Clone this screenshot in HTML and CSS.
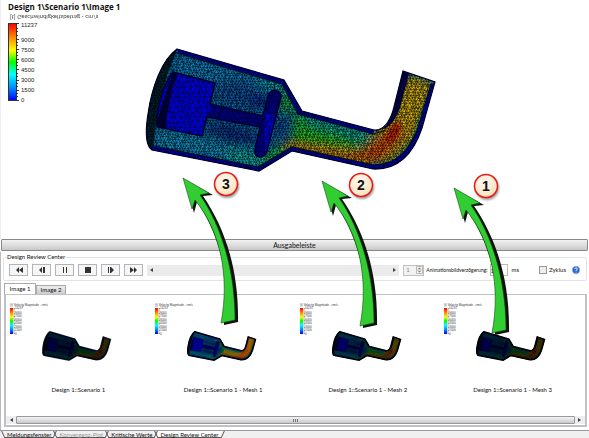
FILE: index.html
```
<!DOCTYPE html>
<html lang="de">
<head>
<meta charset="utf-8">
<title>Design Review Center</title>
<link rel="stylesheet" href="styles.css">
</head>
<body>
<svg class="defs" aria-hidden="true">
  <defs>
    <linearGradient id="ramp" x1="0" y1="0" x2="0" y2="1">
      <stop offset="0" stop-color="#f00"/><stop offset=".16" stop-color="#ff7a00"/><stop offset=".35" stop-color="#ff0"/>
      <stop offset=".5" stop-color="#0f0"/><stop offset=".66" stop-color="#0ff"/><stop offset=".85" stop-color="#0080ff"/><stop offset="1" stop-color="#00f"/>
    </linearGradient>
    <radialGradient id="badge" cx=".4" cy=".35" r=".7">
      <stop offset="0" stop-color="#fffaf2"/><stop offset="1" stop-color="#fbe0b8"/>
    </radialGradient>
    <filter id="soft" x="-50%" y="-50%" width="200%" height="200%"><feGaussianBlur stdDeviation="5"/></filter>
    <filter id="shade" x="-30%" y="-30%" width="160%" height="160%"><feGaussianBlur stdDeviation="1"/></filter>
    <path id="shell" d="M177 49L284 80L302 111L374 130C384 131 391 120 394 107L403 71L435 82L422 128C413 155 397 170 373 169L292 151L259 171L152 150C146 146 145 133 148 114C152 86 162 60 177 49Z"/>
    <path id="core" d="M173 72L215 83L210 104L263 116L268 96C270 87 282 90 281 97L267 151C264 160 253 158 255 150L260 127L207 117L202 136L157 127C156 108 163 85 173 72Z"/>
    <clipPath id="shellClip"><use href="#shell"/></clipPath>
    <clipPath id="coreClip"><use href="#core"/></clipPath>
    <g id="model">
      <g clip-path="url(#shellClip)">
        <rect x="140" y="40" width="300" height="140" fill="#0878b8"/>
        <g filter="url(#soft)">
          <path d="M180 55L275 82L270 98L175 72Z" fill="#0894dc"/>
          <path d="M158 128L250 147L256 168L152 147Z" fill="#08a0d8"/>
          <ellipse cx="238" cy="94" rx="24" ry="14" fill="#0860b8" transform="rotate(14 238 94)"/>
          <ellipse cx="260" cy="100" rx="9" ry="7" fill="#0818a0"/>
          <ellipse cx="232" cy="135" rx="26" ry="9" fill="#0838a0" transform="rotate(14 232 135)"/>
          <path d="M255 76L284 84L288 94L270 88Z" fill="#08c0a8"/>
          <path d="M282 90L294 104L288 114L280 110Z" fill="#20d030"/>
          <ellipse cx="283" cy="126" rx="6" ry="11" fill="#0848b0"/>
          <path d="M225 148L268 154L258 170L230 164Z" fill="#08c8c0"/>
          <path d="M262 158L292 140L302 150L266 168Z" fill="#20d840"/>
          <path d="M296 110L378 130L372 170L290 150Z" fill="#20d828"/>
          <path d="M302 112L372 130L366 142L305 124Z" fill="#08b8b0"/>
          <path d="M284 142L350 150L372 150L376 166L288 154Z" fill="#f88808"/>
          <path d="M374 132L392 114L404 74L434 82L418 136L390 164L365 160Z" fill="#e8c008"/>
          <path d="M346 160L388 132L396 116L404 136L380 160Z" fill="#f05008"/>
          <path d="M342 134L374 134L362 146Z" fill="#08b8a0"/>
        </g>
        <ellipse cx="393" cy="133" rx="5" ry="11" fill="#f02000" filter="url(#shade)" opacity=".8" transform="rotate(35 393 133)"/>
        <path d="M177 51Q157 92 153 150L140 150V60Z" fill="#022838"/>
        <path d="M374 168C398 170 411 154 419 128L424 110" fill="none" stroke="#10b860" stroke-width="6" opacity=".7" filter="url(#shade)"/>
        <path d="M178 50L284 81L301 112L374 131" fill="none" stroke="#0000e0" stroke-width="6"/>
        <path d="M434 84L421 128C412 154 396 168 373 168L292 150L259 170L152 149" fill="none" stroke="#0000e0" stroke-width="6"/>
        <path d="M402 70L409 74L400 108Q395 122 386 128L374 131C386 131 391 120 394 107Z" fill="#000070"/>
        <path class="mesh-fine" fill="none" stroke="#000" stroke-width=".65" opacity=".85"/>
      </g>
      <g clip-path="url(#coreClip)">
        <use href="#core" fill="#0000d4"/>
        <path d="M173 72L178 73Q167 99 166 130L155 127Z" fill="#00003c"/>
        <path d="M215 103L285 118L285 88L265 88V162L250 158L258 127L205 118Z" fill="#000060" opacity=".7"/>
        <path class="mesh-coarse" fill="none" stroke="#000" stroke-width=".6" opacity=".8"/>
      </g>
      <use href="#core" fill="none" stroke="#00002c" stroke-width="1.5"/>
      <path d="M177 53L282 84L298 114L373 134L386 130M431 84L418 128C409 151 396 165 373 165L292 147L258 167L154 146" fill="none" stroke="#001018" stroke-width="1.2"/>
      <use href="#shell" fill="none" stroke="#000028" stroke-width="1.2"/>
    </g>
    <g id="scale">
      <rect x="0" y="2" width="3" height="26" fill="url(#ramp)"/>
      <path d="M4 2V28M4 2.5H5M4 7.5H5M4 10.5H5M4 14.5H5M4 17.5H5M4 21.5H5M4 24.5H5M4 27.5H5" stroke="#777" stroke-width=".6"/>
      <g class="scale-text">
        <text x="0" y="0">(t) Velocity Magnitude - cm/s</text>
        <text x="5" y="3">11237</text><text x="5" y="8">9000</text><text x="5" y="11">7500</text><text x="5" y="15">6000</text>
        <text x="5" y="18">4500</text><text x="5" y="22">3000</text><text x="5" y="25">1500</text><text x="5" y="29">0</text>
      </g>
    </g>
    <g id="arrow">
      <path d="M185 180L213 195L203 196C225 228 239 270 238 322L224 325L224 320C232 270 214 226 197 202L194 213Z" fill="#111"/>
      <path d="M183 178L209 193L200 195C221 225 235 270 235 320L221 323C230 275 220 231 195 200L192 209Z" fill="#32cd32" stroke="#164a16" stroke-width=".6"/>
    </g>
  </defs>
</svg>

<main class="app">
  <section class="viewer">
    <header class="caption">
      <h1>Design 1\Scenario 1\Image 1</h1>
      <p class="flipped">[t] Geschwindigkeitsbetrag - cm/s</p>
    </header>
    <div class="stage">
      <div class="legend">
        <svg class="ramp" viewBox="0 0 11 78" aria-hidden="true">
          <rect x=".5" y=".5" width="8" height="77" fill="url(#ramp)" stroke="#333"/>
          <path d="M9 .5H11M9 16.5H11M9 26.5H11M9 36.5H11M9 46.5H11M9 57.5H11M9 67.5H11M9 77.5H11M9 5.5H10M9 8.5H10M9 12.5H10M9 19.5H10M9 22.5H10M9 29.5H10M9 32.5H10M9 39.5H10M9 42.5H10M9 50.5H10M9 53.5H10M9 60.5H10M9 63.5H10M9 70.5H10M9 73.5H10" stroke="#333"/>
        </svg>
        <ol class="ticks"><li class="max">11237</li><li>9000</li><li>7500</li><li>6000</li><li>4500</li><li>3000</li><li>1500</li><li>0</li></ol>
      </div>
      <svg class="model" viewBox="140 40 300 140" role="img" aria-label="Mesh"><use href="#model"/></svg>
    </div>
  </section>

  <h2 class="bar">Ausgabeleiste</h2>

  <section class="dock">
    <fieldset class="player">
      <legend>Design Review Center</legend>
      <div class="controls">
        <button aria-label="Zurück"><svg viewBox="0 0 8 6"><path d="M4 0V6L1 3ZM8 0V6L4 3Z"/></svg></button>
        <button aria-label="Schritt zurück"><svg viewBox="0 0 8 6"><path d="M4 0V6L1 3ZM5 0H7V6H5Z"/></svg></button>
        <button aria-label="Pause"><svg viewBox="0 0 8 6"><path d="M2 0H3V6H2ZM5 0H6V6H5Z"/></svg></button>
        <button aria-label="Stopp"><svg viewBox="0 0 8 6"><path d="M1 0H7V6H1Z"/></svg></button>
        <button aria-label="Schritt vor"><svg viewBox="0 0 8 6"><path d="M1 0H2V6H1ZM3 0L4 0V6H3ZM4 0L7 3L4 6Z"/></svg></button>
        <button aria-label="Vor"><svg viewBox="0 0 8 6"><path d="M0 0L4 3L0 6ZM4 0L7 3L4 6Z"/></svg></button>
        <div class="track"><svg viewBox="0 0 3 4"><path d="M3 0V4L0 2Z"/></svg><svg viewBox="0 0 3 4"><path d="M0 0L3 2L0 4Z"/></svg></div>
        <div class="spin"><input aria-label="Bild" value="1" disabled><svg viewBox="0 0 7 8"><path d="M.5 .5H6.5V7.5H.5ZM.5 4H6.5" fill="none" stroke="#bbb"/><path d="M2 3H5L3.500 1.500ZM2 5H5L3.500 6.500Z"/></svg></div>
        <label class="delay" for="delay">Animationsbildverzögerung:</label>
        <input class="delay-value" id="delay" value="1">
        <span class="unit">ms</span>
        <label class="loop"><input type="checkbox">Zyklus</label>
        <button class="help" aria-label="Hilfe"><svg viewBox="0 0 8 8"><circle cx="4" cy="4" r="3.700" fill="#2868c8" stroke="#8ab4ec" stroke-width=".6"/><path d="M2.700 3Q3 1.800 4.100 1.900Q5.500 2 5.200 3.200Q5 3.900 4.100 4.100V5M4.100 5.700V6.400" fill="none" stroke="#fff" stroke-width=".9"/></svg></button>
      </div>
    </fieldset>

    <nav class="tabs"><button class="on">Image 1</button><button>Image 2</button></nav>

    <div class="gallery">
      <div class="cells">
        <figure><svg viewBox="0 0 145 80"><use href="#scale" x="4" y="10"/><g transform="translate(2 24) scale(.236)"><use href="#model"/><use href="#shell" fill="#000" opacity=".62" stroke="#000" stroke-width="5"/></g></svg><figcaption>Design 1::Scenario 1</figcaption></figure>
        <figure><svg viewBox="0 0 145 80"><use href="#scale" x="4" y="10"/><g transform="translate(2 24) scale(.236)"><use href="#model"/><path d="M300 132L375 150Q392 149 404 118L413 78" fill="none" stroke="#f06000" stroke-width="16" opacity=".5"/><use href="#shell" fill="#000" fill-opacity=".1" stroke="#001" stroke-width="5"/></g></svg><figcaption>Design 1::Scenario 1 - Mesh 1</figcaption></figure>
        <figure><svg viewBox="0 0 145 80"><use href="#scale" x="4" y="10"/><g transform="translate(2 24) scale(.236)"><use href="#model"/><use href="#shell" fill="#000" fill-opacity=".4" stroke="#000" stroke-width="5"/></g></svg><figcaption>Design 1::Scenario 1 - Mesh 2</figcaption></figure>
        <figure><svg viewBox="0 0 145 80"><use href="#scale" x="4" y="10"/><g transform="translate(2 24) scale(.236)"><use href="#model"/><use href="#shell" fill="#000" fill-opacity=".56" stroke="#000" stroke-width="5"/></g></svg><figcaption>Design 1::Scenario 1 - Mesh 3</figcaption></figure>
      </div>
      <div class="scroll"><svg viewBox="0 0 3 4"><path d="M3 0V4L0 2Z"/></svg><div class="thumb"><i></i><i></i><i></i></div><svg viewBox="0 0 3 4"><path d="M0 0L3 2L0 4Z"/></svg></div>
    </div>
  </section>

  <nav class="sheets">
    <button>Meldungsfenster</button><button disabled>Konvergenz-Plot</button><button>Kritische Werte</button><button class="on">Design Review Center</button>
  </nav>

  <svg class="callouts" viewBox="0 0 589 438" aria-label="Schritte 1 bis 3">
    <use href="#arrow"/><use href="#arrow" x="139" y="3"/><use href="#arrow" x="271" y="10"/>
    <g class="badges">
      <g fill="#999" filter="url(#shade)"><circle cx="227" cy="186" r="12"/><circle cx="362" cy="187" r="12"/><circle cx="487" cy="188" r="12"/></g>
      <g fill="url(#badge)" stroke="#e81818" stroke-width="1.500"><circle cx="226" cy="184" r="11.500"/><circle cx="361" cy="185" r="11.500"/><circle cx="486" cy="186" r="11.500"/></g>
      <text x="226" y="189">3</text><text x="361" y="190">2</text><text x="486" y="191">1</text>
    </g>
  </svg>
</main>
<script src="mesh.js"></script>
</body>
</html>
```
FILE: styles.css
```
* { box-sizing: border-box; }
body { margin: 0; background: #fff; color: #111; font: 6px/8px Lato, "Liberation Sans", sans-serif; }
h1, h2, p, ol, figure { margin: 0; padding: 0; }
button, input { margin: 0; padding: 0; font: inherit; color: inherit; }
svg { display: block; }
.defs { position: absolute; width: 0; height: 0; }
.app { position: relative; overflow: hidden; }

.viewer { padding: 2px 8px 0 7px; border-left: 1px solid #eee; }
.caption { height: 20px; }
h1 { font: 700 8px/10px "Open Sans", sans-serif; }
.flipped { margin-top: 1px; padding-left: 2px; color: #444; width: max-content; transform: scaleY(-1); }
.stage { display: flex; height: 217px; }
.legend { display: flex; flex: 0 0 132px; gap: 2px; }
.ramp { width: 11px; height: 78px; margin-top: 1px; }
.ticks { list-style: none; font: 6px/10px "Liberation Sans", sans-serif; color: #222; margin-top: -2px; }
.ticks .max { margin-bottom: 5px; }
.model { width: 300px; height: 140px; margin-top: 18px; }

.bar { height: 12px; margin: 0 1px 1px; border: 1px solid #888; border-radius: 1px; background: linear-gradient(#f2f2f2, #c8c8c8); font-size: 7px; line-height: 10px; font-weight: 400; text-align: center; }
.dock { margin-right: 1px; padding: 1px 1px 3px 2px; border-left: 1px solid #bbb; }
.player { min-width: 0; margin: 0; padding: 3px 5px 4px; border: 1px solid #e0e4e8; border-radius: 2px; }
.player legend { padding: 0; margin-left: -2px; height: 8px; }
.controls { display: flex; align-items: center; gap: 4px; height: 12px; }
.controls button { flex: none; width: 19px; height: 12px; border: 1px solid #b4b4b8; background: #f6f6f6; display: flex; align-items: center; justify-content: center; }
.controls button svg { width: 8px; height: 6px; fill: #333; }
.track { flex: 1; height: 11px; background: #ebebeb; display: flex; align-items: center; justify-content: space-between; padding: 0 3px; }
.track svg, .scroll svg { width: 3px; height: 4px; fill: #444; }
.spin { width: 21px; height: 11px; border: 1px solid #c0c0c0; background: #f2f2f2; display: flex; align-items: center; }
.spin input { width: 12px; height: 8px; border: 0; padding-left: 2px; background: none; color: #888; }
.spin svg { width: 7px; height: 8px; fill: #777; }
.delay { font-size: 5px; margin: 0 -2px; white-space: nowrap; }
.delay-value { width: 18px; height: 12px; border: 1px solid #bbb; background: #fff; }
.unit { margin-right: 16px; }
.loop { display: flex; align-items: center; gap: 2px; }
.loop input { appearance: none; width: 8px; height: 8px; border: 1px solid #999; background: #eee; }
.controls .help { width: 8px; height: 8px; border: 0; background: none; margin: 0 1px 0 2px; }
.controls .help svg { width: 8px; height: 8px; }

.tabs { display: flex; align-items: flex-end; margin: 2px 0 0 1px; height: 11px; }
.tabs button { width: 30px; height: 9px; border: 1px solid #aaa; border-bottom: 0; background: linear-gradient(#eee, #ccc); line-height: 8px; }
.tabs .on { width: 32px; height: 11px; background: #fff; }
.gallery { border: 2px solid #bfc0c8; border-top-width: 1px; background: #fff; padding: 1px 0; margin-left: 1px; }
.cells { display: grid; grid-template-columns: repeat(4, 1fr); height: 120px; }
.cells figure { text-align: center; min-width: 0; }
.cells svg { width: 145px; height: 80px; overflow: visible; }
.cells figcaption { margin-top: 10px; }
.scale-text { font: 3px "Liberation Sans", sans-serif; fill: #333; }
.scroll { display: flex; align-items: center; gap: 3px; height: 8px; padding: 0 4px; background: #eee; }
.thumb { flex: 1; height: 8px; border: 1px solid #999; border-radius: 1px; background: linear-gradient(#f4f4f4, #c8c8c8); display: flex; gap: 1px; align-items: center; justify-content: center; }
.thumb i { width: 1px; height: 3px; background: #777; }

.sheets { display: flex; height: 9px; border-top: 1px solid #999; background: #f0f0f0; padding-left: 5px; }
.sheets button { position: relative; border: 0; background: none; height: 7px; line-height: 7px; padding: 0 2px; margin-right: 4px; border-bottom: 1px solid #555; }
.sheets button::before, .sheets button::after { content: ""; position: absolute; top: 0; width: 3px; height: 7px; border-bottom: 1px solid #555; }
.sheets button::before { left: -2px; border-left: 1px solid #555; transform: skewX(25deg); }
.sheets button::after { right: -2px; border-right: 1px solid #555; transform: skewX(-25deg); }
.sheets button:disabled { color: #999; }
.sheets .on { background: #fff; }

.callouts { position: absolute; left: 0; top: 0; width: 100%; pointer-events: none; }
.badges text { font: bold 14px "Liberation Sans", sans-serif; text-anchor: middle; fill: #111; }
```
FILE: mesh.js
```
// Builds an irregular triangle mesh over the model's bounding box.
function buildMesh(step, seed) {
  var rnd = function () { seed = (seed * 16807) % 2147483647; return seed / 2147483647; };
  var rows = [], d = "", r, c;
  for (r = 0; r * step < 140; r++) {
    rows[r] = [];
    for (c = 0; c * step < 304; c++) {
      rows[r][c] = [
        (138 + (c + (r % 2) / 2 + (rnd() - 0.5) * 0.6) * step).toFixed(1),
        (42 + (r + (rnd() - 0.5) * 0.6) * step).toFixed(1)
      ];
    }
  }
  for (r = 0; r < rows.length - 1; r++) {
    for (c = 1; c < rows[r].length - 1; c++) {
      var p = rows[r][c], q = rows[r][c + 1];
      var s = rows[r + 1][r % 2 ? c : c - 1], t = rows[r + 1][r % 2 ? c + 1 : c];
      d += "M" + q + "L" + p + "L" + s + "M" + p + "L" + t;
    }
  }
  return d;
}
document.querySelector(".mesh-fine").setAttribute("d", buildMesh(2.8, 17));
document.querySelector(".mesh-coarse").setAttribute("d", buildMesh(5, 91));
```
